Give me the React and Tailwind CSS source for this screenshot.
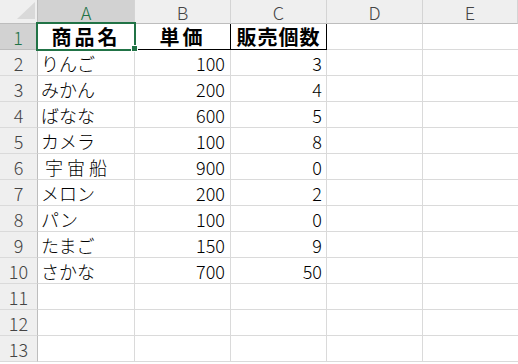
import React from "react";

const ROWS = [
  ["りんご", "100", "3"],
  ["みかん", "200", "4"],
  ["ばなな", "600", "5"],
  ["カメラ", "100", "8"],
  ["宇宙船", "900", "0"],
  ["メロン", "200", "2"],
  ["パン", "100", "0"],
  ["たまご", "150", "9"],
  ["さかな", "700", "50"],
  ["", "", ""],
  ["", "", ""],
  ["", "", ""],
];

const font = { fontFamily: '"Noto Sans CJK JP", "Noto Sans", sans-serif' };

const ColHead = ({ label, w, active }) => (
  <div
    className={`h-[24px] shrink-0 flex items-center justify-center border-r border-b text-[18px] leading-[18px] font-light ${
      active
        ? "bg-[#d2d2d2] text-[#217346] border-r-[#d4d4d4] border-b-[#217346]"
        : "bg-[#efefef] text-[#444] border-r-[#d4d4d4] border-b-[#bdbdbd]"
    } ${w}`}
  >
    {label}
  </div>
);

export default function App() {
  return (
    <div
      className="w-[518px] h-[364px] overflow-hidden bg-white relative select-none leading-[22px]"
      style={font}
    >
      {/* column headers */}
      <div className="flex">
        <div className="w-[38px] h-[24px] shrink-0 bg-[#efefef] border-r border-b border-r-[#bdbdbd] border-b-[#bdbdbd] relative">
          <svg className="absolute left-0 top-0" width="37" height="23">
            <polygon points="17,19 35,19 35,2" fill="#d9d9d9" />
          </svg>
        </div>
        <ColHead label="A" w="w-[97px]" active />
        <ColHead label="B" w="w-[96px]" />
        <ColHead label="C" w="w-[96px]" />
        <ColHead label="D" w="w-[96px]" />
        <ColHead label="E" w="flex-1" />
      </div>

      {/* header row 1 */}
      <div className="flex h-[26px] leading-[20px]">
        <div className="w-[38px] shrink-0 flex items-center justify-center bg-[#d2d2d2] text-[#217346] text-[18px] font-light border-r-2 border-r-[#217346] border-b border-b-[#bdbdbd]">
          1
        </div>
        <div className="w-[97px] shrink-0 flex items-center justify-center border-r border-b border-black font-bold text-[20px] tracking-[3px] text-black">
          商品名
        </div>
        <div className="w-[96px] shrink-0 flex items-center justify-center border-r border-b border-black font-bold text-[20px] tracking-[3px] text-black">
          単価
        </div>
        <div className="w-[96px] shrink-0 flex items-center justify-center border-r border-b border-black font-bold text-[20px] tracking-[1px] text-black">
          販売個数
        </div>
        <div className="w-[96px] shrink-0 border-r border-b border-[#dadada]" />
        <div className="flex-1 border-b border-[#dadada]" />
      </div>

      {/* data rows */}
      {ROWS.map((r, i) => (
        <div key={i} className="flex h-[26px]">
          <div className="w-[38px] shrink-0 flex items-center justify-center bg-[#efefef] text-[#444] text-[18px] font-light border-r border-b border-r-[#bdbdbd] border-b-[#dadada]">
            {i + 2}
          </div>
          <div
            className={`w-[97px] shrink-0 flex items-center border-r border-b border-[#dadada] text-[18px] font-light text-black ${
              r[0] === "宇宙船" ? "pl-[7px] tracking-[4px]" : "pl-[3px]"
            }`}
          >
            {r[0]}
          </div>
          <div className="w-[96px] shrink-0 flex items-center justify-end pr-[5px] border-r border-b border-[#dadada] text-[18px] font-light text-black">
            {r[1]}
          </div>
          <div className="w-[96px] shrink-0 flex items-center justify-end pr-[4px] border-r border-b border-[#dadada] text-[18px] font-light text-black">
            {r[2]}
          </div>
          <div className="w-[96px] shrink-0 border-r border-b border-[#dadada]" />
          <div className="flex-1 border-b border-[#dadada]" />
        </div>
      ))}

      {/* selection A1 */}
      <div className="absolute left-[36px] top-[22px] w-[100px] h-[29px] border-2 border-[#217346] pointer-events-none" />
      <div className="absolute left-[131px] top-[45px] w-[7px] h-[7px] bg-[#217346] border border-white pointer-events-none" />
    </div>
  );
}
